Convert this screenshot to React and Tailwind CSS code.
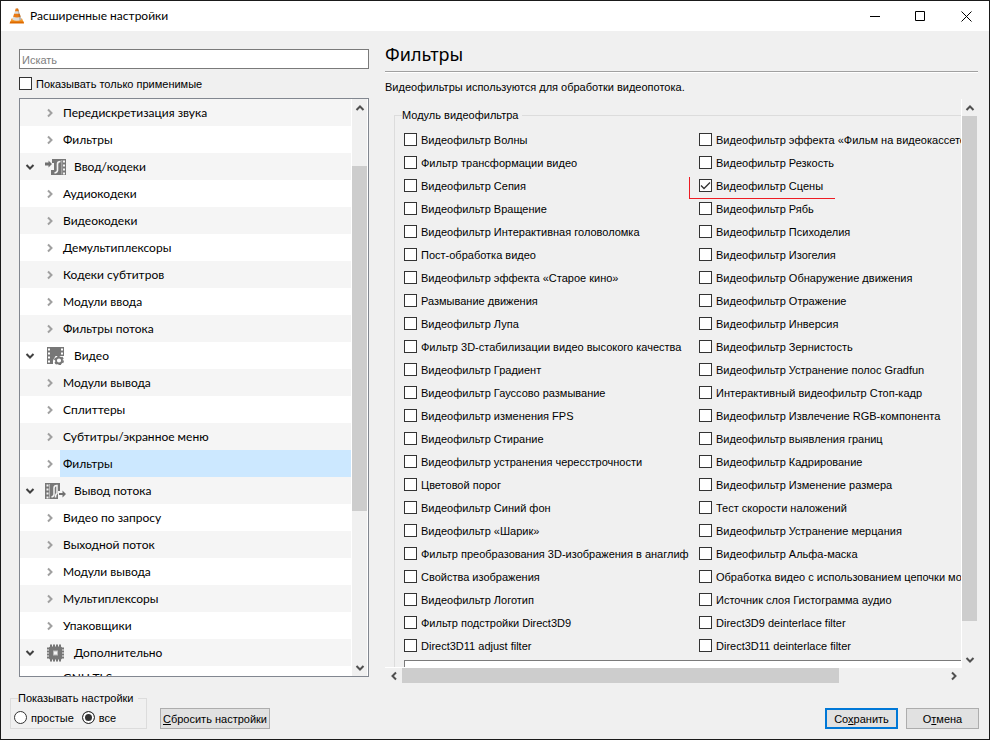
import React from "react";

const tree = [
  { t: "Передискретизация звука" },
  { t: "Фильтры" },
  { t: "Ввод/кодеки", icon: "codec" },
  { t: "Аудиокодеки" },
  { t: "Видеокодеки" },
  { t: "Демультиплексоры" },
  { t: "Кодеки субтитров" },
  { t: "Модули ввода" },
  { t: "Фильтры потока" },
  { t: "Видео", icon: "video" },
  { t: "Модули вывода" },
  { t: "Сплиттеры" },
  { t: "Субтитры/экранное меню" },
  { t: "Фильтры", selected: true },
  { t: "Вывод потока", icon: "stream" },
  { t: "Видео по запросу" },
  { t: "Выходной поток" },
  { t: "Модули вывода" },
  { t: "Мультиплексоры" },
  { t: "Упаковщики" },
  { t: "Дополнительно", icon: "chip" },
  { t: "GNU TLS", leaf: true },
];

const filters = [
  ["Видеофильтр Волны", "Видеофильтр эффекта «Фильм на видеокассете»"],
  ["Фильтр трансформации видео", "Видеофильтр Резкость"],
  ["Видеофильтр Сепия", "Видеофильтр Сцены"],
  ["Видеофильтр Вращение", "Видеофильтр Рябь"],
  ["Видеофильтр Интерактивная головоломка", "Видеофильтр Психоделия"],
  ["Пост-обработка видео", "Видеофильтр Изогелия"],
  ["Видеофильтр эффекта «Старое кино»", "Видеофильтр Обнаружение движения"],
  ["Размывание движения", "Видеофильтр Отражение"],
  ["Видеофильтр Лупа", "Видеофильтр Инверсия"],
  ["Фильтр 3D-стабилизации видео высокого качества", "Видеофильтр Зернистость"],
  ["Видеофильтр Градиент", "Видеофильтр Устранение полос Gradfun"],
  ["Видеофильтр Гауссово размывание", "Интерактивный видеофильтр Стоп-кадр"],
  ["Видеофильтр изменения FPS", "Видеофильтр Извлечение RGB-компонента"],
  ["Видеофильтр Стирание", "Видеофильтр выявления границ"],
  ["Видеофильтр устранения чересстрочности", "Видеофильтр Кадрирование"],
  ["Цветовой порог", "Видеофильтр Изменение размера"],
  ["Видеофильтр Синий фон", "Тест скорости наложений"],
  ["Видеофильтр «Шарик»", "Видеофильтр Устранение мерцания"],
  ["Фильтр преобразования 3D-изображения в анаглиф", "Видеофильтр Альфа-маска"],
  ["Свойства изображения", "Обработка видео с использованием цепочки модулей"],
  ["Видеофильтр Логотип", "Источник слоя Гистограмма аудио"],
  ["Фильтр подстройки Direct3D9", "Direct3D9 deinterlace filter"],
  ["Direct3D11 adjust filter", "Direct3D11 deinterlace filter"],
];

const turns = { right: "", down: "rotate-90", left: "rotate-180", up: "-rotate-90" };

function Chevron({ dir, color = "#505050" }) {
  return (
    <svg width="10" height="10" viewBox="0 0 10 10" className={"shrink-0 " + turns[dir]} aria-hidden="true">
      <path d="M3 1.500 L6.500 5 L3 8.500" fill="none" stroke={color} strokeWidth="2" />
    </svg>
  );
}

function Cone() {
  return (
    <svg width="16" height="16" viewBox="0 0 16 16" aria-hidden="true">
      <path d="M2.500 10.500h10.500l2 4.500H1z" fill="#f59a2c" />
      <path d="M1.200 13.500h13.200l.6 2H.6z" fill="#dd6a00" />
      <path d="M6.800.5h2.200L12.500 11.500q-4.600 2.400-9.200 0z" fill="#dcdcdc" />
      <path d="M6.800.5h2.200l.9 2.800H5.900z" fill="#ea7a14" />
      <path d="M5.100 5.800h5.600l1 3q-3.700 1.500-7.500 0z" fill="#ea7a14" />
      <path d="M8.400.5h.6L12.500 11.500l-2 .9z" fill="#444" opacity=".25" />
    </svg>
  );
}

function NodeIcon({ name }) {
  if (name === "codec")
    return (
      <svg width="22" height="18" viewBox="0 0 22 18" className="shrink-0" aria-hidden="true">
        <path d="M0 4.500h3.500V2.500L7 6 3.500 9.500V7.500H0z" fill="#707070" />
        <path d="M7 1h14v16H6v-5h3V5H7z" fill="#777" />
        <path d="M9.500 15q3.500-.5 3-4V6q0-2.500 3-2.500" fill="none" stroke="#f4f4f4" strokeWidth="1.600" />
        <path d="M19 2.500v14" stroke="#f4f4f4" strokeWidth="2" strokeDasharray="2 2" />
        <path d="M16.800 2v14.500" stroke="#d0d0d0" strokeWidth=".7" />
      </svg>
    );
  if (name === "video")
    return (
      <svg width="22" height="18" viewBox="0 0 22 18" className="shrink-0" aria-hidden="true">
        <path d="M2 0h17v17H2z" fill="#777" />
        <path d="M4 1.500v15M17 1.500v8" stroke="#fff" strokeWidth="2" strokeDasharray="2 2" />
        <path d="M8 18v-4.500L10.500 9H22v9z" fill="#fff" />
        <circle cx="14" cy="13.500" r="4.200" fill="none" stroke="#777" strokeWidth="1.500" strokeDasharray="2.400 2" />
        <circle cx="14" cy="13.500" r="3" fill="none" stroke="#777" strokeWidth="1.800" />
      </svg>
    );
  if (name === "stream")
    return (
      <svg width="22" height="18" viewBox="0 0 22 18" className="shrink-0" aria-hidden="true">
        <path d="M0 1h15v8h-2v8H0z" fill="#777" />
        <path d="M2.500 2.500v14" stroke="#f4f4f4" strokeWidth="2" strokeDasharray="2 2" />
        <path d="M4.500 2v14.500" stroke="#d0d0d0" strokeWidth=".7" />
        <path d="M6.500 15q3-.5 2.500-4V6q0-2.500 3-2.500v8q-1.500.5-1.500 4" fill="none" stroke="#f4f4f4" strokeWidth="1.500" />
        <path d="M14 11h3.500V8.500L21 12l-3.500 3.500V13H14z" fill="#707070" />
      </svg>
    );
  return (
    <svg width="22" height="18" viewBox="0 0 22 18" className="shrink-0" aria-hidden="true">
      <path d="M6 .5v17M9 .5v17M12 .5v17M15 .5v17M2 4.500h17M2 7.500h17M2 10.500h17M2 13.500h17" stroke="#777" strokeWidth="2" />
      <rect x="4" y="2.500" width="13" height="13" rx="1.500" fill="#777" />
      <rect x="8" y="6.500" width="5" height="5" fill="#bbb" />
      <rect x="9" y="7.500" width="3" height="3" fill="#f4f4f4" />
    </svg>
  );
}

function Check({ label, checked, marked }) {
  return (
    <label className="relative flex h-[23px] items-center gap-1 whitespace-nowrap">
      <span className="grid shrink-0">
        <input
          type="checkbox"
          defaultChecked={checked}
          className="peer col-start-1 row-start-1 size-[13px] appearance-none border border-[#333] bg-white"
        />
        <svg viewBox="0 0 13 13" className="pointer-events-none invisible col-start-1 row-start-1 size-[13px] peer-checked:visible" aria-hidden="true">
          <path d="M2 6.500L5 9.500l6-6" fill="none" stroke="#333" strokeWidth="1.300" />
        </svg>
      </span>
      <span>{label}</span>
      {marked && <span className="absolute -left-[10px] top-[3px] h-[22px] w-[146px] border-b border-l border-[#ed1c24]" />}
    </label>
  );
}

const radio =
  "size-[13px] appearance-none rounded-full border border-[#333] bg-white checked:bg-[#333] checked:shadow-[inset_0_0_0_2px_#fff]";
const button = "h-[21px] border border-[#adadad] bg-[#e1e1e1] text-center";

export default function App() {
  return (
    <div className="flex h-screen flex-col overflow-hidden border border-[#1a1a1a] bg-[#f0f0f0] font-['Liberation_Sans',sans-serif] text-[11px] leading-4 text-black">
      <header className="flex h-[30px] shrink-0 items-center bg-white pl-2 font-['Lato',sans-serif] text-[12px]">
        <Cone />
        <h1 className="ml-[5px] flex-1">Расширенные настройки</h1>
        <button aria-label="Свернуть" className="flex h-full w-[45px] items-center justify-center">
          <svg width="11" height="11" viewBox="0 0 11 11"><path d="M0 5.500h10" stroke="#000" /></svg>
        </button>
        <button aria-label="Развернуть" className="flex h-full w-[45px] items-center justify-center">
          <svg width="11" height="11" viewBox="0 0 11 11"><path d="M.5.5h9v9h-9z" fill="none" stroke="#000" /></svg>
        </button>
        <button aria-label="Закрыть" className="flex h-full w-[46px] items-center justify-center">
          <svg width="11" height="11" viewBox="0 0 11 11"><path d="M.5.5l10 10M10.500.5l-10 10" stroke="#000" /></svg>
        </button>
      </header>

      <main className="flex min-h-0 flex-1 gap-4 pl-[18px] pr-[11px] pt-[18px]">
        <section className="flex w-[350px] shrink-0 flex-col pb-[6px]">
          <input
            aria-label="Искать"
            placeholder="Искать"
            className="h-5 shrink-0 border border-[#7a7a7a] bg-white px-0.5 pt-0.5 placeholder:text-[#808080]"
          />
          <div className="my-[3px]">
            <Check label="Показывать только применимые" />
          </div>
          <div className="flex min-h-0 flex-1 border border-[#828790] bg-white">
            <ul className="mr-px flex-1 overflow-hidden font-['Lato',sans-serif] text-[12px]">
              {tree.map((n, i) => (
                <li key={i} className="flex h-[27px] items-center odd:bg-[#f5f5f5] even:bg-white last:h-6">
                  {n.icon ? (
                    <>
                      <span className="flex w-5 justify-center"><Chevron dir="down" color="#404040" /></span>
                      <span className="ml-[5px] flex w-[29px]"><NodeIcon name={n.icon} /></span>
                      <span>{n.t}</span>
                    </>
                  ) : (
                    <>
                      <span className="flex w-10 justify-end pr-[5px]">{!n.leaf && <Chevron dir="right" color="#a0a0a0" />}</span>
                      <span className={"flex h-full flex-1 items-center pl-[3px] " + (n.selected ? "bg-[#cce8ff]" : "")}>{n.t}</span>
                    </>
                  )}
                </li>
              ))}
            </ul>
            <div className="mr-px flex w-[15px] flex-col items-center bg-[#f0f0f0]">
              <span className="flex h-[17px] items-center"><Chevron dir="up" /></span>
              <span className="h-[50px]" />
              <span className="h-[345px] w-full bg-[#cdcdcd]" />
              <span className="mt-auto flex h-[17px] items-center"><Chevron dir="down" /></span>
            </div>
          </div>
        </section>

        <section className="flex min-w-0 flex-1 flex-col">
          <h2 className="h-[23px] shrink-0 border-b border-[#a0a0a0] font-['Noto_Sans',sans-serif] text-[18px] leading-[10px] shadow-[0_1px_0_#fff]">Фильтры</h2>
          <p className="mt-[7px] shrink-0">Видеофильтры используются для обработки видеопотока.</p>
          <div className="mr-px mt-1 grid min-h-0 flex-1 grid-cols-[minmax(0,1fr)_15px] grid-rows-[minmax(0,1fr)_15px]">
            <div className="overflow-hidden border-b border-r border-white pl-[9px] pt-2">
              <fieldset className="w-[700px] border border-[#dcdcdc] pb-4 pl-[9px]">
                <legend className="-ml-0.5 pr-1">Модуль видеофильтра</legend>
                <div className="mt-[5px] grid grid-cols-[295px_1fr]">
                  {filters.map(([a, b], i) => (
                    <React.Fragment key={i}>
                      <Check label={a} />
                      <Check label={b} checked={i === 2} marked={i === 2} />
                    </React.Fragment>
                  ))}
                </div>
                <input aria-label="Модуль видеофильтра" className="mt-[3px] h-5 w-[660px] border border-[#7a7a7a] bg-white" />
              </fieldset>
            </div>
            <div className="flex flex-col items-center">
              <span className="flex h-[17px] items-center"><Chevron dir="up" /></span>
              <span className="h-[505px] w-full bg-[#cdcdcd]" />
              <span className="mt-auto flex h-[17px] items-center"><Chevron dir="down" /></span>
            </div>
            <div className="flex items-center">
              <span className="flex w-[17px] justify-center"><Chevron dir="left" /></span>
              <span className="h-full w-[437px] bg-[#cdcdcd]" />
              <span className="ml-auto flex w-[17px] justify-center"><Chevron dir="right" /></span>
            </div>
          </div>
        </section>
      </main>

      <footer className="flex shrink-0 items-end pb-[10px] pl-[9px] pr-[10px] pt-[7px]">
        <fieldset className="flex h-[39px] w-[137px] border border-[#dcdcdc] pl-[3px]">
          <legend className="ml-1 pr-1">Показывать настройки</legend>
          <div className="flex items-center gap-2 pt-px">
            <label className="flex items-center gap-1"><input type="radio" name="mode" className={radio} />простые</label>
            <label className="flex items-center gap-1"><input type="radio" name="mode" defaultChecked className={radio} />все</label>
          </div>
        </fieldset>
        <button className={button + " ml-[13px] w-[110px] whitespace-nowrap"}><u>С</u>бросить настройки</button>
        <button className="ml-auto h-[21px] w-[73px] border-2 border-[#0078d7] bg-[#e1e1e1]">Со<u>х</u>ранить</button>
        <button className={button + " ml-2 w-[73px]"}>О<u>т</u>мена</button>
      </footer>
    </div>
  );
}
